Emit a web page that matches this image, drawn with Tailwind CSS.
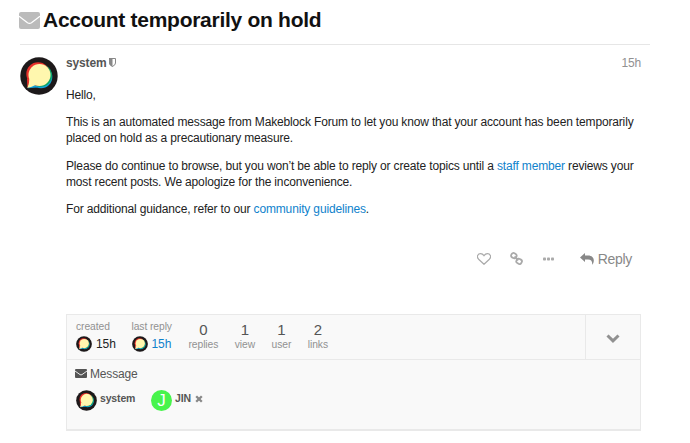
<!DOCTYPE html>
<html lang="en">
<head>
  <meta charset="UTF-8" />
  <title>Account temporarily on hold</title>
  <script src="https://cdn.jsdelivr.net/npm/@tailwindcss/browser@4"></script>
</head>

<body class="bg-white text-[#222] font-['Liberation_Sans',Arial,sans-serif] text-[12px] tracking-[-0.155px] leading-4 h-[443px] overflow-hidden">

  <!-- Shared avatar symbol -->
  <svg class="hidden">
    <symbol id="avatar" viewBox="0 0 38 38">
      <circle cx="19" cy="19" r="18.7" fill="#1d191a" />
      <circle cx="21" cy="19.900" r="11.300" fill="#12a4dc" />
      <path d="M7.500 31.200L17 30.500L14 27Z" fill="#12a4dc" />
      <circle cx="20.700" cy="18.500" r="11.300" fill="#0ba564" />
      <circle cx="18" cy="17" r="11.700" fill="#e8302a" />
      <path d="M7 21L10 24L7.300 30.500Z" fill="#e8302a" />
      <circle cx="19.500" cy="18" r="11" fill="#fff7ae" />
      <path d="M9.300 22Q9.600 26 7.300 30.900Q12 30.300 15.500 28Z" fill="#fff7ae" />
    </symbol>
  </svg>

  <main class="pl-5 w-[650px]">
    <!-- Title -->
    <header class="flex items-center h-[45px] pb-1 border-b border-[#e6e6e6] gap-[3px]">
      <svg class="w-[21px] h-[17px] -ml-px" viewBox="0 0 21 17">
        <path d="M2 0h17a2 2 0 0 1 2 2v13a2 2 0 0 1-2 2H2a2 2 0 0 1-2-2V2a2 2 0 0 1 2-2Z" fill="#bbb" />
        <path d="M0 4.2L8.500 10.800Q10.500 12 12.500 10.800L21 4.200" fill="none" stroke="#fff" stroke-width="1.3" />
      </svg>
      <h1 class="text-[21px] tracking-[-0.28px] leading-6 font-bold text-[#111] whitespace-nowrap">Account temporarily on hold</h1>
    </header>

    <!-- Post -->
    <article class="flex pt-3">
      <svg class="w-[38px] h-[38px] mr-2 shrink-0"><use href="#avatar" /></svg>
      <div class="w-[575px] shrink-0">
        <div class="flex items-center h-[11px]">
          <span class="font-bold text-[#555]">system</span>
          <svg class="w-[7px] h-[9px] ml-[3px]" viewBox="0 0 7 9">
            <path d="M.5.5h6V5Q6.500 7 3.500 8.500Q.5 7 .5 5Z" fill="#fff" stroke="#888" />
            <path d="M0 0h3.500v9Q0 7 0 5Z" fill="#888" />
          </svg>
          <span class="ml-auto text-[#919191]">15h</span>
        </div>
        <div class="flex flex-col gap-[11.5px] mt-[18.5px] whitespace-nowrap">
          <p>Hello,</p>
          <p>This is an automated message from Makeblock Forum to let you know that your account has been temporarily<br />placed on hold as a precautionary measure.</p>
          <p>Please do continue to browse, but you won’t be able to reply or create topics until a <a class="text-[#0f82cc]">staff member</a> reviews your<br />most recent posts. We apologize for the inconvenience.</p>
          <p>For additional guidance, refer to our <a class="text-[#0f82cc]">community guidelines</a>.</p>
        </div>

        <!-- Post controls -->
        <div class="flex items-center justify-end h-5 mt-[31.5px] pr-[9px]">
          <svg class="w-[14px] h-[12px]" viewBox="0 0 14 12">
            <path d="M7 11.300L1.600 6.200C-1 3.500 1 .6 3.600.6C5.500.6 6.500 2 7 2.700C7.500 2 8.500.6 10.400.6C13 .6 15 3.500 12.400 6.200Z" fill="none" stroke="#aaa" stroke-width="1.200" />
          </svg>
          <svg class="w-[13px] h-[13px] ml-[19px]" viewBox="0 0 13 13" fill="none" stroke="#aaa" stroke-width="1.800">
            <rect x="1.200" y="1.200" width="5.400" height="4.800" rx="2" transform="rotate(30 3.800 3.600)" />
            <rect x="6.400" y="7" width="5.400" height="4.800" rx="2" transform="rotate(30 9.200 9.400)" />
            <path d="M4.500 4.500L8.300 8.300" />
          </svg>
          <svg class="w-[11px] h-[4px] ml-5" viewBox="0 0 11 4" fill="#aaa">
            <rect y=".5" width="3" height="3" rx=".8" />
            <rect x="4" y=".5" width="3" height="3" rx=".8" />
            <rect x="8" y=".5" width="3" height="3" rx=".8" />
          </svg>
          <svg class="w-[14px] h-[12px] ml-[26px] mr-1" viewBox="0 0 14 12">
            <path d="M0 4.500L5 0V2.600H8C12 2.600 14 5 13.800 8Q13.700 10 12.200 12Q12.700 6.600 8 6.600H5V9Z" fill="#888" />
          </svg>
          <span class="text-[14px] tracking-[-0.33px] text-[#888]">Reply</span>
        </div>

        <!-- Topic map -->
        <section class="mt-[45px] h-[117px] bg-[#f9f9f9] border border-b-2 border-[#e9e9e9]">
          <div class="flex h-[45px] border-b border-[#e9e9e9] text-[#919191] text-[10.3px] tracking-[-0.08px] leading-3">
            <div class="ml-[9px] w-[55.5px] pt-[6px]">
              <div>created</div>
              <div class="flex items-center gap-1 mt-[3px] text-[12px] leading-4 text-[#222]">
                <svg class="w-4 h-4"><use href="#avatar" /></svg>15h
              </div>
            </div>
            <div class="w-[57px] pt-[6px] whitespace-nowrap">
              <div>last reply</div>
              <div class="flex items-center gap-1 mt-[3px] text-[12px] leading-4 text-[#0f82cc]">
                <svg class="w-4 h-4"><use href="#avatar" /></svg>15h
              </div>
            </div>
            <div class="flex gap-[16.5px] pt-[7px] text-center">
              <div><div class="text-[15px] leading-4 text-[#555]">0</div><div class="mt-px">replies</div></div>
              <div><div class="text-[15px] leading-4 text-[#555]">1</div><div class="mt-px">view</div></div>
              <div><div class="text-[15px] leading-4 text-[#555]">1</div><div class="mt-px">user</div></div>
              <div><div class="text-[15px] leading-4 text-[#555]">2</div><div class="mt-px">links</div></div>
            </div>
            <div class="ml-auto w-[55px] border-l border-[#e9e9e9] flex items-center justify-center">
              <svg class="w-[14px] h-[9px] mt-[3px]" viewBox="0 0 14 9">
                <path d="M1.500 1.500L7 6.800L12.500 1.500" fill="none" stroke="#919191" stroke-width="3" />
              </svg>
            </div>
          </div>

          <div class="pl-[9px] pt-[6px] text-[#555]">
            <div class="flex items-center gap-[3px] -ml-px">
              <svg class="w-[12px] h-[9px]" viewBox="0 0 12 9">
                <rect width="12" height="9" rx="1" fill="#555" />
                <path d="M0 2L5 5.600Q6 6.200 7 5.600L12 2" fill="none" stroke="#f9f9f9" stroke-width=".9" />
              </svg>
              <span>Message</span>
            </div>
            <div class="flex mt-2 text-[10.5px] leading-[17px] font-bold">
              <svg class="w-[21px] h-[21px] mr-[3px]"><use href="#avatar" /></svg>
              <span class="w-[51px]">system</span>
              <div class="w-[21px] h-[21px] rounded-full bg-[#48f44c] text-white text-[17px] leading-[22px] font-normal text-center mr-[3px]">J</div>
              <span>JIN</span>
              <svg class="w-[8px] h-[8px] mt-[5px] ml-1" viewBox="0 0 8 8">
                <path d="M1.200 1.200L6.800 6.800M6.800 1.200L1.200 6.800" stroke="#888" stroke-width="2.300" />
              </svg>
            </div>
          </div>
        </section>
      </div>
    </article>
  </main>

</body>
</html>
